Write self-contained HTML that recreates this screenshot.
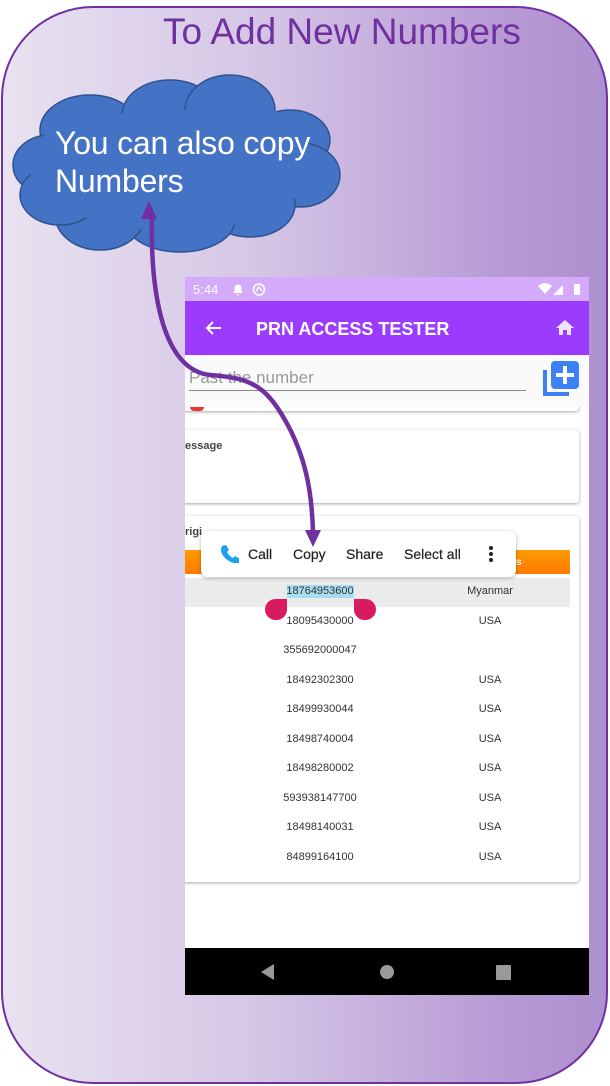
<!DOCTYPE html>
<html><head><meta charset="utf-8"><style>
*{margin:0;padding:0;box-sizing:border-box}
body{width:610px;height:1086px;overflow:hidden;background:#fff;font-family:"Liberation Sans",sans-serif;position:relative}
.bg{position:absolute;left:1px;top:6px;width:607px;height:1078px;border:2px solid #7030a0;border-radius:92px;background:linear-gradient(to right,#e8e2f0,#d6c8e6 40%,#b698d4 85%,#ae90d0)}
.t{position:absolute;white-space:nowrap}
.scr{position:absolute;left:185px;top:277px;width:404px;height:718px;background:#fff;overflow:hidden}
.card{position:absolute;background:#fff;border-radius:3px;box-shadow:0 1px 3px rgba(0,0,0,.35)}
.num{position:absolute;left:70px;width:130px;text-align:center;font-size:11px;color:#333}
.cty{position:absolute;left:270px;width:70px;text-align:center;font-size:11px;color:#333}
.pm{position:absolute;white-space:nowrap;top:269px;font-size:14px;color:#222;font-weight:500;-webkit-text-stroke:0.2px #222}
</style></head><body>
<div class="bg"></div>
<div class="t" style="left:163px;top:11px;font-size:37px;color:#7030a0">To Add New Numbers</div>
<svg style="position:absolute;left:0;top:0" width="360" height="270">
<g fill="#4472c4" stroke="#2f528f" stroke-width="1.5">
<ellipse cx="90" cy="130" rx="50" ry="35"/>
<ellipse cx="170" cy="115" rx="48" ry="35"/>
<ellipse cx="230" cy="110" rx="45" ry="35"/>
<ellipse cx="290" cy="140" rx="40" ry="30"/>
<ellipse cx="300" cy="175" rx="40" ry="32"/>
<ellipse cx="250" cy="205" rx="45" ry="32"/>
<ellipse cx="180" cy="220" rx="55" ry="32"/>
<ellipse cx="100" cy="215" rx="45" ry="35"/>
<ellipse cx="50" cy="165" rx="37" ry="30"/>
<ellipse cx="60" cy="195" rx="40" ry="30"/>
</g>
<ellipse cx="170" cy="170" rx="140" ry="60" fill="#4472c4"/>
<ellipse cx="90" cy="160" rx="55" ry="45" fill="#4472c4"/>
<ellipse cx="240" cy="150" rx="70" ry="45" fill="#4472c4"/>
</svg>
<div class="t" style="left:55px;top:124px;font-size:32px;line-height:38px;color:#fff;letter-spacing:-0.2px">You can also copy<br>Numbers</div>
<div class="scr">
 <div style="position:absolute;left:0;top:0;width:404px;height:24px;background:#d3abfa"></div>
 <div class="t" style="left:8px;top:5px;font-size:13px;color:#fff">5:44</div>
 <svg style="position:absolute;left:46px;top:5px" width="40" height="15"><path d="M2 11h10l-1.5-2V6a3.5 3.5 0 0 0-7 0v3zM5.5 12.5h3l-1.5 1.5z" fill="#fff"/><circle cx="28" cy="7.5" r="5.5" fill="none" stroke="#fff" stroke-width="1.6"/><path d="M25 9l3-4 3 4" fill="none" stroke="#fff" stroke-width="1.4"/></svg>
 <svg style="position:absolute;left:352px;top:5px" width="48" height="16"><path d="M1 4q7-6 14 0l-7 8z" fill="#fff"/><path d="M16 13l10-10v10z" fill="#fff"/><rect x="37" y="2" width="6" height="11" rx="1" fill="#fff"/></svg>
 <div style="position:absolute;left:0;top:24px;width:404px;height:54px;background:#9a3bfd"></div>
 <svg style="position:absolute;left:19px;top:43px" width="18" height="16"><path d="M17 8H3M9 2L3 8l6 6" fill="none" stroke="#fff" stroke-width="2"/></svg>
 <div class="t" style="left:71px;top:42px;font-size:18px;font-weight:bold;color:#fff">PRN ACCESS TESTER</div>
 <svg style="position:absolute;left:370px;top:42px" width="20" height="17"><path d="M10 1L1 9h3v7h4v-5h4v5h4V9h3z" fill="#efe3ff"/></svg>
 <div style="position:absolute;left:0;top:78px;width:404px;height:52px;background:#fafafa"></div>
 <div class="card" style="left:-5px;top:100px;width:399px;height:34px"></div>
 <div style="position:absolute;left:0;top:80px;width:404px;height:50px;background:#fafafa"></div>
 <div class="t" style="left:4px;top:91px;font-size:17px;color:#999">Past the number</div>
 <div style="position:absolute;left:4px;top:113px;width:337px;height:1px;background:#888"></div>
 <div style="position:absolute;left:5px;top:130px;width:14px;height:4px;border-radius:0 0 7px 7px;background:#e53935"></div>
 <svg style="position:absolute;left:357px;top:81px" width="40" height="40"><path d="M3 12v24h24" fill="none" stroke="#3c82f6" stroke-width="4"/><rect x="9" y="3" width="28" height="28" rx="4" fill="#3c82f6"/><path d="M23 8v18M14 17h18" stroke="#fff" stroke-width="4"/></svg>
 <div class="card" style="left:-5px;top:153px;width:399px;height:73px"></div>
 <div class="t" style="left:0;top:163px;font-size:11px;font-weight:bold;color:#444">essage</div>
 <div class="card" style="left:-5px;top:239px;width:399px;height:366px"></div>
 <div class="t" style="left:0;top:249px;font-size:11px;font-weight:bold;color:#444">rigi</div>
 <div style="position:absolute;left:0;top:273px;width:385px;height:24px;background:linear-gradient(#ff9a00,#ff7a00)"></div>
 <div class="t" style="left:331px;top:280px;font-size:10px;font-weight:bold;color:#fff">s</div>
 <div style="position:absolute;left:0;top:301px;width:385px;height:29px;background:#ebebeb"></div>
 <div style="position:absolute;left:102px;top:308px;width:67px;height:13px;background:#a8dcef"></div>
 <div class="num" style="top:308px">18764953600</div><div class="cty" style="top:308px;left:270px">Myanmar</div>
 <div style="position:absolute;left:80px;top:322px;width:22px;height:21px;background:#d81b60;border-radius:11px 0 11px 11px"></div>
 <div style="position:absolute;left:169px;top:322px;width:22px;height:21px;background:#d81b60;border-radius:0 11px 11px 11px"></div>
 <div class="num" style="top:338px">18095430000</div><div class="cty" style="top:338px">USA</div>
 <div class="num" style="top:367px">355692000047</div>
 <div class="num" style="top:397px">18492302300</div><div class="cty" style="top:397px">USA</div>
 <div class="num" style="top:426px">18499930044</div><div class="cty" style="top:426px">USA</div>
 <div class="num" style="top:456px">18498740004</div><div class="cty" style="top:456px">USA</div>
 <div class="num" style="top:485px">18498280002</div><div class="cty" style="top:485px">USA</div>
 <div class="num" style="top:515px">593938147700</div><div class="cty" style="top:515px">USA</div>
 <div class="num" style="top:544px">18498140031</div><div class="cty" style="top:544px">USA</div>
 <div class="num" style="top:574px">84899164100</div><div class="cty" style="top:574px">USA</div>
 <div style="position:absolute;left:16px;top:254px;width:315px;height:46px;background:#fff;border-radius:7px;box-shadow:0 1px 4px rgba(0,0,0,.3)"></div>
 <svg style="position:absolute;left:34px;top:267px" width="20" height="20"><path d="M3 2l4-1 3 5-2 2q2 4 6 6l2-2 5 3-1 4q-8 1-14-5T3 2z" fill="#1ea0ee"/></svg>
 <div class="pm" style="left:63px">Call</div>
 <div class="pm" style="left:108px">Copy</div>
 <div class="pm" style="left:161px">Share</div>
 <div class="pm" style="left:219px">Select all</div>
 <svg style="position:absolute;left:303px;top:268px" width="6" height="18"><circle cx="3" cy="3" r="2" fill="#222"/><circle cx="3" cy="9" r="2" fill="#222"/><circle cx="3" cy="15" r="2" fill="#222"/></svg>
 <div style="position:absolute;left:0;top:671px;width:404px;height:47px;background:#000"></div>
 <svg style="position:absolute;left:0;top:671px" width="404" height="47"><path d="M76 24l13-8v16z" fill="#999"/><circle cx="202" cy="24" r="7" fill="#999"/><rect x="311" y="17" width="15" height="15" rx="1" fill="#999"/></svg>
</div>
<svg style="position:absolute;left:0;top:0" width="610" height="1086">
<path d="M152 215C150 300 165 370 210 375C250 378 265 385 285 420C305 455 312 490 313 533" fill="none" stroke="#7030a0" stroke-width="4.5"/>
<path d="M141 219L149 201L157 219z" fill="#7030a0"/>
<path d="M305 530L313 547L321 530z" fill="#7030a0"/>
</svg>
</body></html>
